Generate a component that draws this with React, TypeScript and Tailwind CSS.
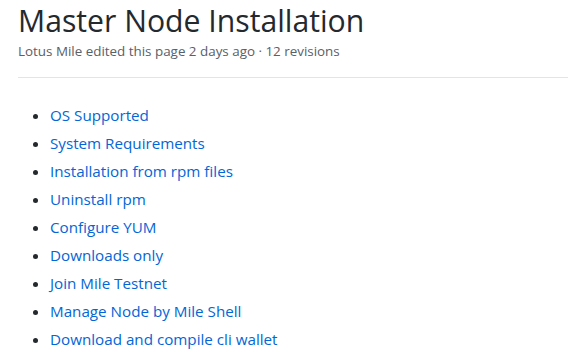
const links = [
  "OS Supported",
  "System Requirements",
  "Installation from rpm files",
  "Uninstall rpm",
  "Configure YUM",
  "Downloads only",
  "Join Mile Testnet",
  "Manage Node by Mile Shell",
  "Download and compile cli wallet",
];

export default function App() {
  return (
    <div className="h-[363px] w-[568px] overflow-hidden bg-white pl-[18px] font-['Open_Sans',sans-serif] text-[#24292e]">
      <div className="pb-[16px] pt-[1px]">
        <h1 className="text-[30.2px] leading-[40px] font-normal">Master Node Installation</h1>
        <div className="text-[13.4px] leading-[20px] text-[#586069]">
          Lotus Mile edited this page 2 days ago · 12 revisions
        </div>
      </div>
      <div className="border-t border-[#e1e4e8] pt-[25px]">
        <ul className="list-disc pl-8 text-[15.2px] leading-6">
          {links.map((label, i) => (
            <li key={label} className={i > 0 ? "mt-1" : ""}>
              <a href="#" className="text-[#0366d6]">
                {label}
              </a>
            </li>
          ))}
        </ul>
      </div>
    </div>
  );
}
